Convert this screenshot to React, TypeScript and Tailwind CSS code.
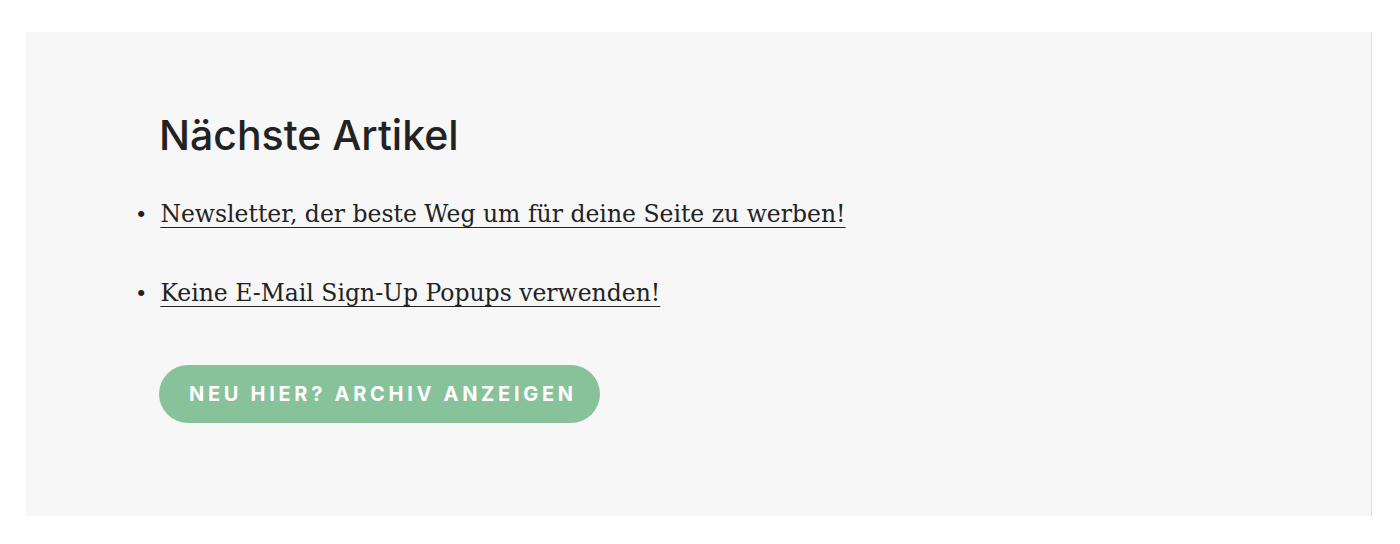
export default function App() {
  const articles = [
    "Newsletter, der beste Weg um für deine Seite zu werben!",
    "Keine E-Mail Sign-Up Popups verwenden!",
  ];

  return (
    <div className="h-[544px] w-[1400px] bg-white pl-[26px] pt-[32px]">
      <div className="h-[484px] w-[1346px] border-r border-[#dcdcdc] bg-[#f7f7f7] pl-[133px] pt-[77px]">
        <h2 className="font-['Inter',sans-serif] text-[41px] leading-[52px] font-medium text-[#222]">
          Nächste Artikel
        </h2>
        <ul className="mt-[40px] ml-[-24px] list-none space-y-[52px] font-['DejaVu_Serif',serif] text-[23.5px] leading-[26px] text-[#222]">
          {articles.map((a) => (
            <li key={a} className="flex items-baseline gap-[13px]">
              <span className="text-[21px]">•</span>
              <a href="#" className="underline decoration-1 underline-offset-[5px]">
                {a}
              </a>
            </li>
          ))}
        </ul>
        <button
          type="button"
          className="mt-[58px] h-[58px] rounded-full bg-[#88c29a] pl-[30px] pr-[23px] font-['Inter',sans-serif] text-[20px] font-bold tracking-[0.185em] text-white"
        >
          NEU HIER? ARCHIV ANZEIGEN
        </button>
      </div>
    </div>
  );
}
